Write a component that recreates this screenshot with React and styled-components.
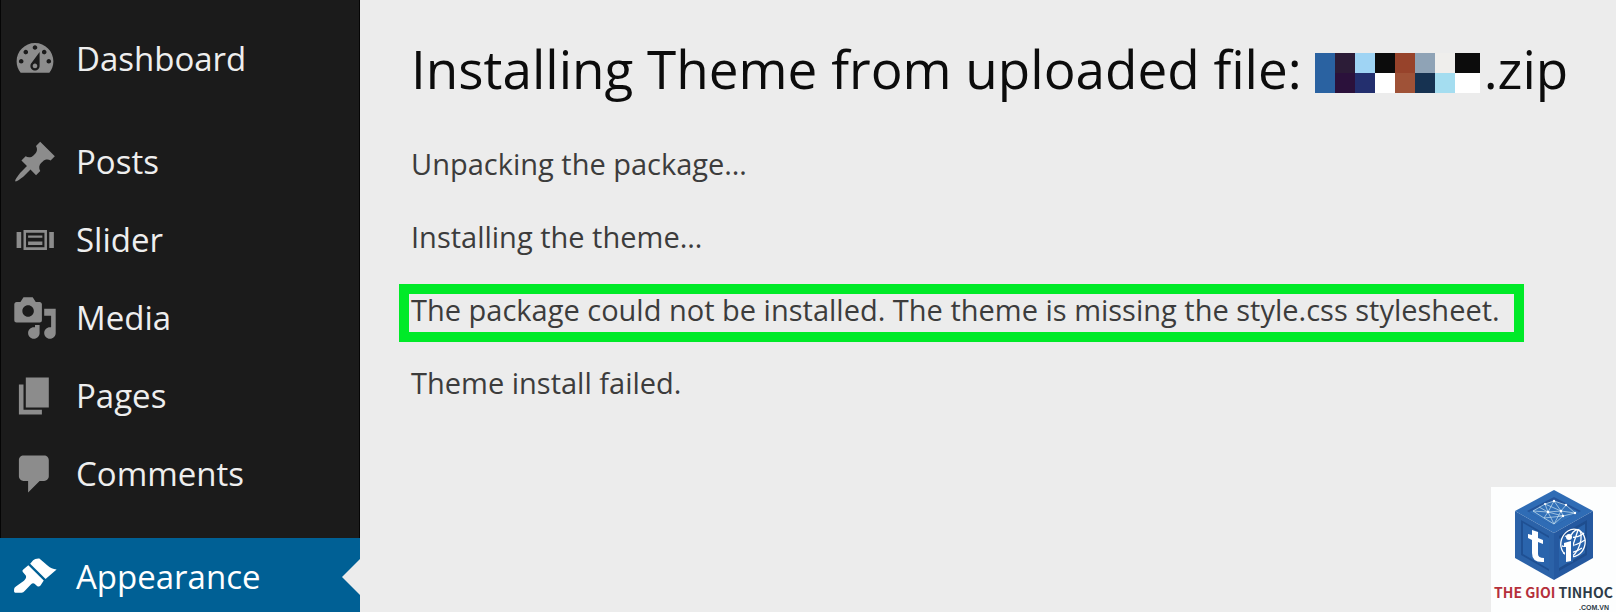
import React from "react";
import styled, { createGlobalStyle } from "styled-components";

const GlobalStyle = createGlobalStyle`
  * {
    box-sizing: border-box;
  }

  body {
    margin: 0;
    background: #ececec;
    font-family: "Open Sans", "Noto Sans", sans-serif;
  }
`

const Layout = styled.div`
  display: flex;
  height: 100vh;
  overflow: hidden;
`

const Sidebar = styled.nav`
  flex: 0 0 360px;
  padding-top: 20px;
  background: #1b1b1b;
  box-shadow: inset 1px 0 #050505, inset -1px 0 #050505;
`

const Menu = styled.ul`
  margin: 0;
  padding: 0;
  list-style: none;
`

const MenuItem = styled.li`
  margin-top: ${({ $separated }) => ($separated ? "25px" : "0")};
`

const MenuLink = styled.a`
  position: relative;
  display: flex;
  align-items: center;
  gap: 18px;
  height: 78px;
  padding-left: 12px;
  color: ${({ $active }) => ($active ? "#fff" : "#eee")};
  background: ${({ $active }) => ($active ? "#006095" : "transparent")};
  font-size: 33px;
  line-height: 44px;
  text-decoration: none;

  &::after {
    content: "";
    display: ${({ $active }) => ($active ? "block" : "none")};
    position: absolute;
    top: 21px;
    right: 0;
    border: 18px solid transparent;
    border-left: 0;
    border-right-color: #ececec;
  }
`

const MenuIcon = styled.svg`
  width: 46px;
  height: 46px;
  fill: ${({ $active }) => ($active ? "#fff" : "#8c8c8c")};
`

const Content = styled.main`
  flex: 1;
  min-width: 0;
  padding: 34px 0 0 51px;
  color: #3c3c3c;
`

const Title = styled.h1`
  display: flex;
  align-items: center;
  margin: 0;
  color: #0c0c0c;
  font-size: 53px;
  font-weight: 400;
  line-height: 70px;
  white-space: nowrap;
`

const Mosaic = styled.span`
  display: grid;
  grid-template-columns: repeat(7, 20px) 25px;
  grid-auto-rows: 20px;
  margin: 7px 4px 0 13px;
`

const Pixel = styled.span`
  background: ${({ $color }) => $color};
`

const Log = styled.div`
  display: flex;
  flex-direction: column;
  align-items: flex-start;
  gap: 41px;
  margin-top: 44px;
`

const Message = styled.p`
  margin: 0;
  font-size: 29px;
  line-height: 32px;
  white-space: nowrap;
`

const ErrorMessage = styled(Message)`
  margin: -10px 0 -16px -12px;
  padding: 0 14px 6px 2px;
  border: 10px solid #00ea28;
`

const Badge = styled.a`
  position: fixed;
  right: 0;
  bottom: 0;
  display: flex;
  flex-direction: column;
  align-items: center;
  width: 125px;
  height: 125px;
  padding-top: 2px;
  background: #fdfefe;
  color: #2d3b47;
  font-family: "Noto Sans CJK SC", "Liberation Sans", sans-serif;
  text-decoration: none;
`

const BadgeName = styled.span`
  font-size: 14px;
  font-weight: 700;
  line-height: 23px;
  white-space: nowrap;
`

const BadgeAccent = styled.span`
  color: #b5303b;
`

const BadgeDomain = styled.span`
  align-self: flex-end;
  padding-right: 7px;
  font-family: "Liberation Sans", sans-serif;
  font-size: 7px;
  font-weight: 700;
  line-height: 7px;
`

const ICONS = {
  dashboard: "M3.76 16h12.48c1.1-1.37 1.76-3.11 1.76-5 0-4.42-3.58-8-8-8s-8 3.58-8 8c0 1.89.66 3.63 1.76 5zM10 4c.55 0 1 .45 1 1s-.45 1-1 1-1-.45-1-1 .45-1 1-1zM6 6c.55 0 1 .45 1 1s-.45 1-1 1-1-.45-1-1 .45-1 1-1zm8 0c.55 0 1 .45 1 1s-.45 1-1 1-1-.45-1-1 .45-1 1-1zm-5.37 5.55L12 7v6c0 1.1-.9 2-2 2s-2-.9-2-2c0-.57.24-1.08.63-1.45zM4 10c.55 0 1 .45 1 1s-.45 1-1 1-1-.45-1-1 .45-1 1-1zm12 0c.55 0 1 .45 1 1s-.45 1-1 1-1-.45-1-1 .45-1 1-1zm-5 3c0-.55-.45-1-1-1s-1 .45-1 1 .45 1 1 1 1-.45 1-1z",
  posts: "M10.44 3.02l1.82-1.82 6.36 6.35-1.83 1.82c-1.05-.68-2.48-.57-3.41.36l-.75.75c-.92.93-1.04 2.35-.35 3.41l-1.83 1.82-2.41-2.41-2.8 2.79c-.42.42-3.38 2.71-3.8 2.29s1.86-3.39 2.28-3.81l2.79-2.79L4.1 9.36l1.83-1.82c1.05.69 2.48.57 3.4-.36l.75-.75c.93-.92 1.05-2.35.36-3.41z",
  slider: "M2 6.5h2v7H2zM16.2 6.5h2v7h-2zM5 5.7h10.2v8.6H5zM6.1 6.8v6.4h8V6.8zM7 8h6.2v1H7zM7 10.6h6.2v1.6H7z",
  media: "M13 11V4c0-.55-.45-1-1-1h-1.67L9 1H5L3.67 3H2c-.55 0-1 .45-1 1v7c0 .55.45 1 1 1h10c.55 0 1-.45 1-1zM7 4.5c1.38 0 2.5 1.12 2.5 2.5S8.38 9.5 7 9.5 4.5 8.38 4.5 7 5.62 4.5 7 4.5zM14 6h5v10.5c0 1.38-1.12 2.5-2.5 2.5S14 17.88 14 16.5s1.12-2.5 2.5-2.5c.17 0 .34.02.5.05V9h-3V6zm-4 8.05V13h2v3.5c0 1.38-1.12 2.5-2.5 2.5S7 17.88 7 16.5 8.12 14 9.5 14c.17 0 .34.02.5.05z",
  pages: "M6 15V2h10v13H6zm-1 1h8v2H3V5h2v11z",
  comments: "M5 2h9c1.1 0 2 .9 2 2v7c0 1.1-.9 2-2 2h-2l-5 5v-5H5c-1.1 0-2-.9-2-2V4c0-1.1.9-2 2-2z",
  appearance: "M7.9 4.2L9.2 2.7Q10 1.9 11.9 2L15.7 5.2Q17 6.5 19.4 6.7L14.6 10.9zM7.1 4.9L13.8 11.5L12.4 13.7Q11.7 14.5 10.9 13.9L9.8 12.9Q9 12.4 8.2 13.3L5.6 16Q4.9 16.8 4.2 16.8H1.4Q.9 16.8 .9 16.3V15.3Q.9 14.6 1.7 14.1L5.2 11.6Q6.5 10.3 6 9.3L4.7 7.8Q4.2 7.2 4.9 6.7z",
};

const MENU = [
  { id: "dashboard", label: "Dashboard" },
  { id: "posts", label: "Posts", separated: true },
  { id: "slider", label: "Slider" },
  { id: "media", label: "Media" },
  { id: "pages", label: "Pages" },
  { id: "comments", label: "Comments" },
  { id: "appearance", label: "Appearance", separated: true, active: true },
];

const PIXELS = [
  "#2a62a1", "#2c1c37", "#9fd4f4", "#0c0c0c", "#97432b", "#8fa3b6", "#efeeec", "#0c0c0c",
  "#2a62a1", "#2b113b", "#232f6e", "#fff", "#9f5237", "#163251", "#a4ddf0", "#fff",
];

const CubeLogo = () => (
  <svg width="82" height="92" viewBox="0 0 82 92" aria-hidden="true">
    <path d="M41 1L80 22L41 44L2 22z" fill="#2f6cb5" />
    <path d="M2 22L41 44V91L2 69z" fill="#2b62a8" />
    <path d="M80 22L41 44V91L80 69z" fill="#2559a0" />
    <path d="M41 8L68 22L41 37L14 22z" fill="#24549a" />
    <path d="M41 11L66 23L41 37L16 23z" fill="#3271b9" />
    <path d="M8 31L36 47V82L8 66z" fill="#1f5093" />
    <path d="M10 34L36 49V80L10 65z" fill="#2a64ac" />
    <path d="M74 31L46 47V82L74 66z" fill="#1e4d8e" />
    <path d="M72 35L46 50V79L72 64z" fill="#2a64ac" />
    <g fill="none" stroke="#c7e0ee" strokeWidth=".7">
      <path d="M20 22L32 15L41 12L53 16L62 24L50 27L41 35L31 29L20 22L35 23L48 22L62 24M32 15L35 23L41 12L48 22L53 16M35 23L31 29L50 27L48 22L41 35M26 18L35 23L50 27M35 23L41 35M32 15L48 22" />
    </g>
    <g fill="#fff">
      <circle cx="41" cy="12" r="1.2" />
      <circle cx="53" cy="16" r="1.2" />
      <circle cx="35" cy="23" r="1.3" />
      <circle cx="48" cy="22" r="1.3" />
      <circle cx="62" cy="24" r="1.2" />
      <circle cx="50" cy="27" r="1.2" />
      <circle cx="32" cy="15" r="1" />
    </g>
    <path d="M19 41L25 43V49L30 51V55L25 53V65Q25 69 31 69V73Q19 74 19 64V51L15 49V45L19 46z" fill="#fff" />
    <g fill="none" stroke="#fff" strokeWidth="1.3">
      <ellipse cx="60" cy="54" rx="12" ry="14" transform="rotate(18 60 54)" />
      <ellipse cx="61" cy="54" rx="6" ry="14" transform="rotate(18 61 54)" />
      <path d="M65 41L56 68M52 47Q62 51 71 44M49 57Q60 59 72 51M50 64Q60 65 69 59" />
    </g>
    <path d="M51 49L60 46V73L52 74V56L50 57z" fill="#2a64ac" />
    <circle cx="56" cy="48" r="3" fill="#fff" />
    <path d="M51 54L58 52V72L53 73V58L51 58z" fill="#fff" />
  </svg>
);

const App = () => {
  return (
    <>
      <GlobalStyle />
      <Layout>
        <Sidebar>
          <Menu>
            {MENU.map(({ id, label, separated, active }) => (
              <MenuItem key={id} $separated={separated}>
                <MenuLink href={"#" + id} $active={active} aria-current={active ? "page" : undefined}>
                  <MenuIcon viewBox="0 0 20 20" fillRule="evenodd" $active={active} aria-hidden="true">
                    <path d={ICONS[id]} />
                  </MenuIcon>
                  {label}
                </MenuLink>
              </MenuItem>
            ))}
          </Menu>
        </Sidebar>
        <Content>
          <Title>
            Installing Theme from uploaded file:
            <Mosaic aria-hidden="true">
              {PIXELS.map((color, i) => <Pixel key={i} $color={color} />)}
            </Mosaic>
            .zip
          </Title>
          <Log>
            <Message>Unpacking the package…</Message>
            <Message>Installing the theme…</Message>
            <ErrorMessage role="alert">
              The package could not be installed. The theme is missing the style.css stylesheet.
            </ErrorMessage>
            <Message>Theme install failed.</Message>
          </Log>
        </Content>
      </Layout>
      <Badge href="#home">
        <CubeLogo />
        <BadgeName><BadgeAccent>THE GIOI</BadgeAccent> TINHOC</BadgeName>
        <BadgeDomain>.COM.VN</BadgeDomain>
      </Badge>
    </>
  );
};

export default App;
